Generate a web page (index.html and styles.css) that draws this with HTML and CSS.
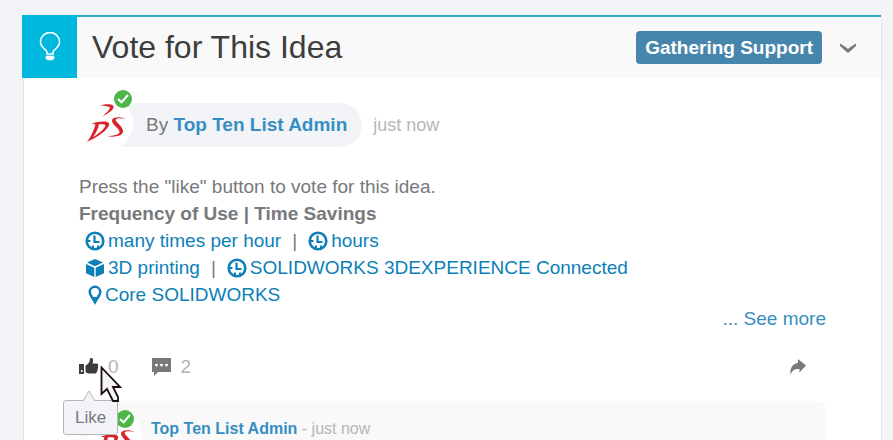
FILE: index.html
```html
<!DOCTYPE html>
<html lang="en">
<head>
    <meta charset="UTF-8">
    <meta name="viewport" content="width=device-width, initial-scale=1.0">
    <title>Vote for This Idea</title>
    <link rel="stylesheet" href="styles.css">
</head>
<body>

    <!-- shared icons -->
    <svg class="sprite" aria-hidden="true">
        <symbol id="icon-clock" viewBox="0 0 20 20">
            <circle cx="10" cy="10" r="8.300" fill="none" stroke="currentColor" stroke-width="2.600"/>
            <path d="M9.500 4.500V11H14.500" fill="none" stroke="currentColor" stroke-width="2.200"/>
            <path d="M3 9h2.500v2H3zM7 14.500h2V17H7zM12 14.500h2V17h-2z" fill="currentColor"/>
        </symbol>
        <symbol id="icon-cube" viewBox="0 0 20 20">
            <path d="M10 1l8 3.600-8 3.600-8-3.600zM1 6l8.300 3.700V19L1 15.200zM19 6l-8.300 3.700V19l8.300-3.800z" fill="currentColor"/>
        </symbol>
        <symbol id="icon-pin" viewBox="0 0 14 20">
            <path fill-rule="evenodd" d="M7 .5a6.500 6.500 0 0 1 6.500 6.500c0 3.500-3.500 6.500-6.500 13C4 13.500.5 10.500.5 7A6.500 6.500 0 0 1 7 .5zM7 3a4 4 0 0 0-4 4c0 2 1.500 3.300 2.300 5h3.400C9.500 10.300 11 9 11 7a4 4 0 0 0-4-4z" fill="currentColor"/>
        </symbol>
        <symbol id="logo-3ds" viewBox="0 0 40 40">
            <g fill="#d8232a">
                <path d="M14 2.500c6-1.500 12.500-1.800 13.500.8 1 2.700-4.500 7.200-11.500 10.200 4.500-3.500 8.500-7.500 7.800-9-.7-1.300-5-1.500-9.800-2z"/>
                <path fill-rule="evenodd" d="M6 20.500c6-2.200 15.500-3 17-.2C25 24.500 12 34.500.5 39c3-2.500 6-8.500 9-17.500zM13 21.300c-1 5-3 9-6 12.700 7-4 12.800-9.500 12.300-11.700-.3-1.200-3-1.200-6.300-1z"/>
                <path d="M40 15.800c-6-1-9.500-.8-10.300.8C28.800 18.800 38 24 37 29c-1 4.500-10 5.500-16 4 6-.2 11.500-1 12.500-3.500C34.500 26.300 25.500 21.500 26 17.500c.6-3.800 7.500-4.300 14-1.700z"/>
            </g>
        </symbol>
        <symbol id="icon-check" viewBox="0 0 18 18">
            <circle cx="9" cy="9" r="9" fill="#4db648"/>
            <path d="M4 9l3.500 3.300L14 5" fill="none" stroke="#fff" stroke-width="2"/>
        </symbol>
    </svg>

    <main class="card">
        <header class="card-header">
            <div class="type-icon">
                <svg width="22" height="30" viewBox="0 0 22 30" fill="none" stroke="#fff" stroke-width="1.600">
                    <path d="M8 22v-2c0-2-6.500-4.500-6.500-10a9.500 9.500 0 0 1 19 0c0 5.500-6.500 8-6.500 10v2z"/>
                    <path d="M7.500 24.500h7v2h-1.500v1H9v-1H7.500z" fill="#fff"/>
                </svg>
            </div>
            <h1>Vote for This Idea</h1>
            <span class="status">Gathering Support</span>
            <button class="icon-btn menu-btn" aria-label="Open menu">
                <svg width="18" height="12" viewBox="0 0 18 12"><path d="M1 1.500c3 1.500 5 3 8 5.500 3-2.500 5-4 8-5.500V4L9 11 1 4z" fill="#77797c"/></svg>
            </button>
        </header>

        <div class="card-body">
            <div class="byline">
                <span class="avatar">
                    <svg class="logo"><use href="#logo-3ds"/></svg>
                    <svg class="check"><use href="#icon-check"/></svg>
                </span>
                <span class="author">By <a href="#">Top Ten List Admin</a></span>
                <span class="time">just now</span>
            </div>

            <div class="content">
                <p>Press the "like" button to vote for this idea.</p>
                <h2>Frequency of Use | Time Savings</h2>
                <div class="tags">
                    <a href="#"><svg><use href="#icon-clock"/></svg>many times per hour</a>
                    <span class="sep">|</span>
                    <a href="#"><svg><use href="#icon-clock"/></svg>hours</a>
                </div>
                <div class="tags">
                    <a href="#"><svg><use href="#icon-cube"/></svg>3D printing</a>
                    <span class="sep">|</span>
                    <a href="#"><svg><use href="#icon-clock"/></svg>SOLIDWORKS 3DEXPERIENCE Connected</a>
                </div>
                <div class="tags">
                    <a class="place" href="#"><svg><use href="#icon-pin"/></svg>Core SOLIDWORKS</a>
                </div>
            </div>
            <a class="see-more" href="#">... See more</a>

            <div class="actions">
                <div class="like">
                    <button class="icon-btn" aria-label="Like">
                        <svg width="20" height="20" viewBox="0 0 20 20" fill="#3d3d3d">
                            <path d="M0 7h5v10H0zM2 13v2h1.500v-2z" fill-rule="evenodd"/>
                            <path d="M6.500 8.500C9 7.500 11 5 11 1.500c1-1 3-.5 3 1.500 0 1.500-.3 2.500-.5 3.500H18c1.500.5 1.500 2 .8 3 .7 1 .5 2-.3 2.700.4 1 0 2-.7 2.500 0 1.300-.8 1.800-2 1.800H10c-1.500 0-2.500-.8-3.500-1.500z"/>
                        </svg>
                        <span>0</span>
                    </button>
                    <span class="tooltip" role="tooltip">Like<svg class="arrow" viewBox="0 0 14 11"><path d="M1 11L7 1l6 10" fill="#f3f4f7" stroke="#b4b6ba"/></svg></span>
                    <svg class="cursor" width="22" height="37" viewBox="0 0 22 37"><path d="M1.500 1.500V28l5.500-5 6 12h5v-4l-5-10h7z" fill="#f3f4f6" stroke="#1c0c10" stroke-width="1.800"/></svg>
                </div>
                <button class="icon-btn" aria-label="Comments">
                    <svg width="20" height="19" viewBox="0 0 20 19">
                        <path d="M0 1h19v14H6l-4 4v-4H0z" fill="#77797c"/>
                        <path d="M3 7h3v1l-1.500 2L3 8zM8 7h3v1l-1.500 2L8 8zM13 7h3v1l-1.500 2L13 8z" fill="#fff"/>
                    </svg>
                    <span>2</span>
                </button>
                <button class="icon-btn share" aria-label="Share">
                    <svg width="16" height="16" viewBox="0 0 16 16"><path d="M8 0l8 6.500-6.500 7V10C5 9.500 2.500 11 .5 15.500 0 8 3 4.500 8 4z" fill="#77797c"/></svg>
                </button>
            </div>

            <section class="comment">
                <span class="avatar small">
                    <svg class="logo"><use href="#logo-3ds"/></svg>
                    <svg class="check"><use href="#icon-check"/></svg>
                </span>
                <p><a href="#">Top Ten List Admin</a> - just now</p>
            </section>
        </div>
    </main>

</body>
</html>
```
FILE: styles.css
```css
* {
    box-sizing: border-box;
}
body {
    margin: 0;
    padding: 15px 11px 0 23px;
    height: 100vh;
    overflow: hidden;
    background: #f3f4f7;
    font-family: "Liberation Sans", Arial, sans-serif;
    font-size: 19px;
    line-height: 27px;
    color: #77797c;
}
h1, h2, p {
    margin: 0;
}
a {
    color: #368ec4;
    text-decoration: none;
}
.sprite {
    display: none;
}
.icon-btn {
    display: flex;
    align-items: center;
    gap: 9px;
    padding: 0;
    border: none;
    background: none;
    font: inherit;
    color: #b4b6ba;
    cursor: pointer;
}
.card {
    min-height: 100%;
    background: #fff;
    border: 1px solid #e2e4e8;
    border-top: none;
    border-bottom: none;
}
.card-header {
    display: flex;
    align-items: center;
    height: 63px;
    margin-left: -2px;
    padding-right: 24px;
    background: #f9f9f9;
    border-top: 2px solid #2fa9bf;
}
.type-icon {
    display: flex;
    align-items: center;
    justify-content: center;
    width: 55px;
    height: 63px;
    margin-top: -2px;
    background: #00b8de;
}
h1 {
    flex: 1;
    padding-left: 15px;
    font-size: 32px;
    font-weight: normal;
    color: #3d3d3d;
}
.status {
    padding: 3px 9px;
    border-radius: 4px;
    background: #4786ac;
    color: #fff;
    font-weight: bold;
}
.menu-btn {
    margin-left: 17px;
}
.card-body {
    padding: 25px 55px 0 55px;
}
.byline {
    display: flex;
    align-items: center;
}
.avatar {
    position: relative;
    z-index: 1;
    flex: none;
    width: 54px;
    height: 54px;
    margin: -11px 0 -7px;
    padding: 7px;
    border-radius: 50%;
    background: #fff;
}
.logo {
    display: block;
    width: 40px;
    height: 40px;
}
.check {
    position: absolute;
    top: -6px;
    right: 1px;
    width: 18px;
    height: 18px;
}
.author {
    margin-left: -12px;
    padding: 8px 15px 9px 25px;
    border-radius: 0 22px 22px 0;
    background: #f3f4f7;
}
.author a {
    font-weight: bold;
}
.time {
    margin-left: 11px;
    font-size: 18px;
    color: #b4b6ba;
}
.content {
    margin-top: 26px;
}
h2 {
    font-size: 19px;
    line-height: 27px;
}
.tags {
    display: flex;
    padding-left: 6px;
}
.tags a {
    display: flex;
    align-items: center;
    gap: 3px;
    color: #0c7fb8;
}
.tags svg {
    width: 20px;
    height: 20px;
}
.tags .place {
    gap: 0;
}
.sep {
    margin: 0 11px;
}
.see-more {
    display: block;
    margin-top: -3px;
    text-align: right;
}
.actions {
    display: flex;
    align-items: center;
    gap: 33px;
    margin-top: 21px;
}
.like {
    position: relative;
}
.share {
    margin-left: auto;
    margin-right: 20px;
}
.tooltip {
    position: absolute;
    z-index: 2;
    top: 47px;
    left: -16px;
    padding: 3px 11px;
    border: 1px solid #b4b6ba;
    border-radius: 3px;
    background: #f3f4f7;
    font-size: 17px;
}
.arrow {
    position: absolute;
    top: -11px;
    left: 18px;
    width: 14px;
    height: 11px;
}
.cursor {
    position: absolute;
    z-index: 3;
    top: 13px;
    left: 21px;
}
.comment {
    display: flex;
    margin-top: 21px;
    padding: 8px 9px;
    border-radius: 8px;
    background: #f9f9f9;
    font-size: 16px;
    color: #b4b6ba;
}
.comment a {
    font-weight: bold;
}
.comment p {
    padding-top: 6px;
}
.small {
    margin: 0 9px 0 0;
}
.small .check {
    top: 1px;
    right: 8px;
}
```
